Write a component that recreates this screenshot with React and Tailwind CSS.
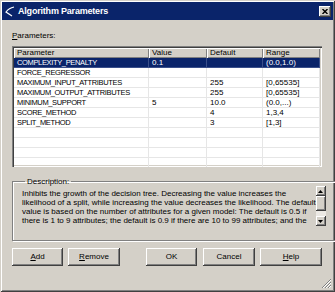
import React from "react";

const raised =
  "shadow-[inset_-1px_-1px_0_#404040,inset_1px_1px_0_#ffffff,inset_-2px_-2px_0_#808080,inset_2px_2px_0_#d4d0c8]";

const rows = [
  ["COMPLEXITY_PENALTY", "0.1", "", "(0.0,1.0)"],
  ["FORCE_REGRESSOR", "", "", ""],
  ["MAXIMUM_INPUT_ATTRIBUTES", "", "255", "[0,65535]"],
  ["MAXIMUM_OUTPUT_ATTRIBUTES", "", "255", "[0,65535]"],
  ["MINIMUM_SUPPORT", "5", "10.0", "(0.0,...)"],
  ["SCORE_METHOD", "", "4", "1,3,4"],
  ["SPLIT_METHOD", "", "3", "[1,3]"],
  ["", "", "", ""],
  ["", "", "", ""],
  ["", "", "", ""],
  ["", "", "", ""],
];

const cols = ["w-[135px]", "w-[58px]", "w-[56px]", "w-[57px]"];
const heads = ["Parameter", "Value", "Default", "Range"];

const descLines = [
  "Inhibits the growth of the decision tree. Decreasing the value increases the",
  "likelihood of a split, while increasing the value decreases the likelihood. The default",
  "value is based on the number of attributes for a given model: The default is 0.5 if",
  "there is 1 to 9 attributes; the default is 0.9 if there are 10 to 99 attributes; and the",
];

const Btn = ({ w, children }) => (
  <button
    className={`${w} h-[18px] bg-[#d4d0c8] ${raised} flex items-center justify-center text-[8px] text-black`}
  >
    {children}
  </button>
);

const ScrollBtn = ({ up }) => (
  <div className={`w-[10px] h-[10px] bg-[#d4d0c8] ${raised} flex items-center justify-center`}>
    <svg width="5" height="3" viewBox="0 0 5 3">
      {up ? <path d="M2.5 0 L5 3 L0 3 Z" fill="#000" /> : <path d="M0 0 L5 0 L2.5 3 Z" fill="#000" />}
    </svg>
  </div>
);

export default function App() {
  return (
    <div
      className="relative w-[335px] h-[292px] bg-[#d4d0c8] p-[2px] flex flex-col shadow-[inset_1px_1px_0_#d4d0c8,inset_-1px_-1px_0_#404040,inset_2px_2px_0_#ffffff,inset_-2px_-2px_0_#808080]"
      style={{ fontFamily: '"Liberation Sans", Arial, sans-serif' }}
    >
      {/* title bar */}
      <div className="h-[18px] bg-[#0a246a] flex items-center pl-[2px] pr-[2px]">
        <svg width="12" height="12" viewBox="0 0 12 12" className="shrink-0">
          <path d="M10 2 Q5 3 2 7 L8 11" stroke="#fff" strokeWidth="1.2" fill="none" />
        </svg>
        <span className="ml-[2px] text-white font-bold text-[9px] tracking-[-0.2px] leading-none">
          Algorithm Parameters
        </span>
        <div className={`ml-auto w-[12px] h-[11px] bg-[#d4d0c8] ${raised} flex items-center justify-center`}>
          <svg width="6" height="5" viewBox="0 0 6 5">
            <path d="M0.5 0 L5.5 5 M5.5 0 L0.5 5" stroke="#000" strokeWidth="1.4" />
          </svg>
        </div>
      </div>

      <div className="flex flex-col pl-[10px] pr-[11px]">
        <div className="mt-[10px] h-[12px] leading-[12px] text-[8px] text-black">
          <span className="underline">P</span>arameters:
        </div>

        {/* parameters list */}
        <div className="mt-[4px] h-[121px] bg-white p-[2px] shadow-[inset_1px_1px_0_#808080,inset_2px_2px_0_#404040,inset_-1px_-1px_0_#ffffff,inset_-2px_-2px_0_#d4d0c8] overflow-hidden">
          <div className="flex h-[10px]">
            {heads.map((h, i) => (
              <div
                key={h}
                className={`${cols[i]} bg-[#d4d0c8] shadow-[inset_1px_1px_0_#ffffff,inset_-1px_-1px_0_#808080] pl-[3px] text-[8px] leading-[10px] text-black`}
              >
                {h}
              </div>
            ))}
          </div>
          {rows.map((r, ri) => (
            <div key={ri} className="flex h-[10px]">
              {r.map((c, ci) => (
                <div
                  key={ci}
                  className={`${cols[ci]} border-b border-r ${
                    ri === 0 ? "bg-[#0a246a] text-white border-[#3a4f8a]" : "text-black border-[#e6e6e6]"
                  } ${
                    ci === 0 ? "text-[7.5px] tracking-[-0.35px]" : "text-[8px]"
                  } pl-[3px] leading-[9px] whitespace-nowrap overflow-hidden`}
                >
                  {c}
                </div>
              ))}
            </div>
          ))}
        </div>

        {/* description */}
        <fieldset className="mt-[10px] h-[64px] border border-[#808080] shadow-[inset_1px_1px_0_#ffffff,1px_1px_0_#ffffff] px-[9px] pt-[3px]">
          <legend className="ml-[3px] px-[2px] text-[8px] leading-[9px] text-black">Description:</legend>
          <div className="flex">
            <div className="flex-1 text-[8px] leading-[9px] text-black">
              {descLines.map((l) => (
                <div key={l} className="whitespace-nowrap">{l}</div>
              ))}
            </div>
            <div className="w-[10px] h-[40px] -mt-[3px] flex flex-col bg-[#ece9e4]">
              <ScrollBtn up />
              <div className={`h-[15px] bg-[#d4d0c8] ${raised}`} />
              <div className="flex-1" />
              <ScrollBtn />
            </div>
          </div>
        </fieldset>

        {/* buttons */}
        <div className="mt-[7px] flex">
          <Btn w="w-[51px]">
            <span className="underline">A</span>dd
          </Btn>
          <div className="ml-[5px]">
            <Btn w="w-[52px]">
              <span className="underline">R</span>emove
            </Btn>
          </div>
          <div className="ml-[26px]">
            <Btn w="w-[51px]">OK</Btn>
          </div>
          <div className="ml-[6px]">
            <Btn w="w-[52px]">Cancel</Btn>
          </div>
          <div className="ml-[5px]">
            <Btn w="w-[62px]">
              <span className="underline">H</span>elp
            </Btn>
          </div>
        </div>
      </div>

      {/* size grip */}
      <svg width="11" height="11" viewBox="0 0 11 11" className="absolute right-[3px] bottom-[3px]">
        <path d="M10 1 L1 10 M10 4 L4 10 M10 7 L7 10" stroke="#808080" strokeWidth="1" />
        <path d="M10 2 L2 10 M10 5 L5 10 M10 8 L8 10" stroke="#ffffff" strokeWidth="1" />
      </svg>
    </div>
  );
}
